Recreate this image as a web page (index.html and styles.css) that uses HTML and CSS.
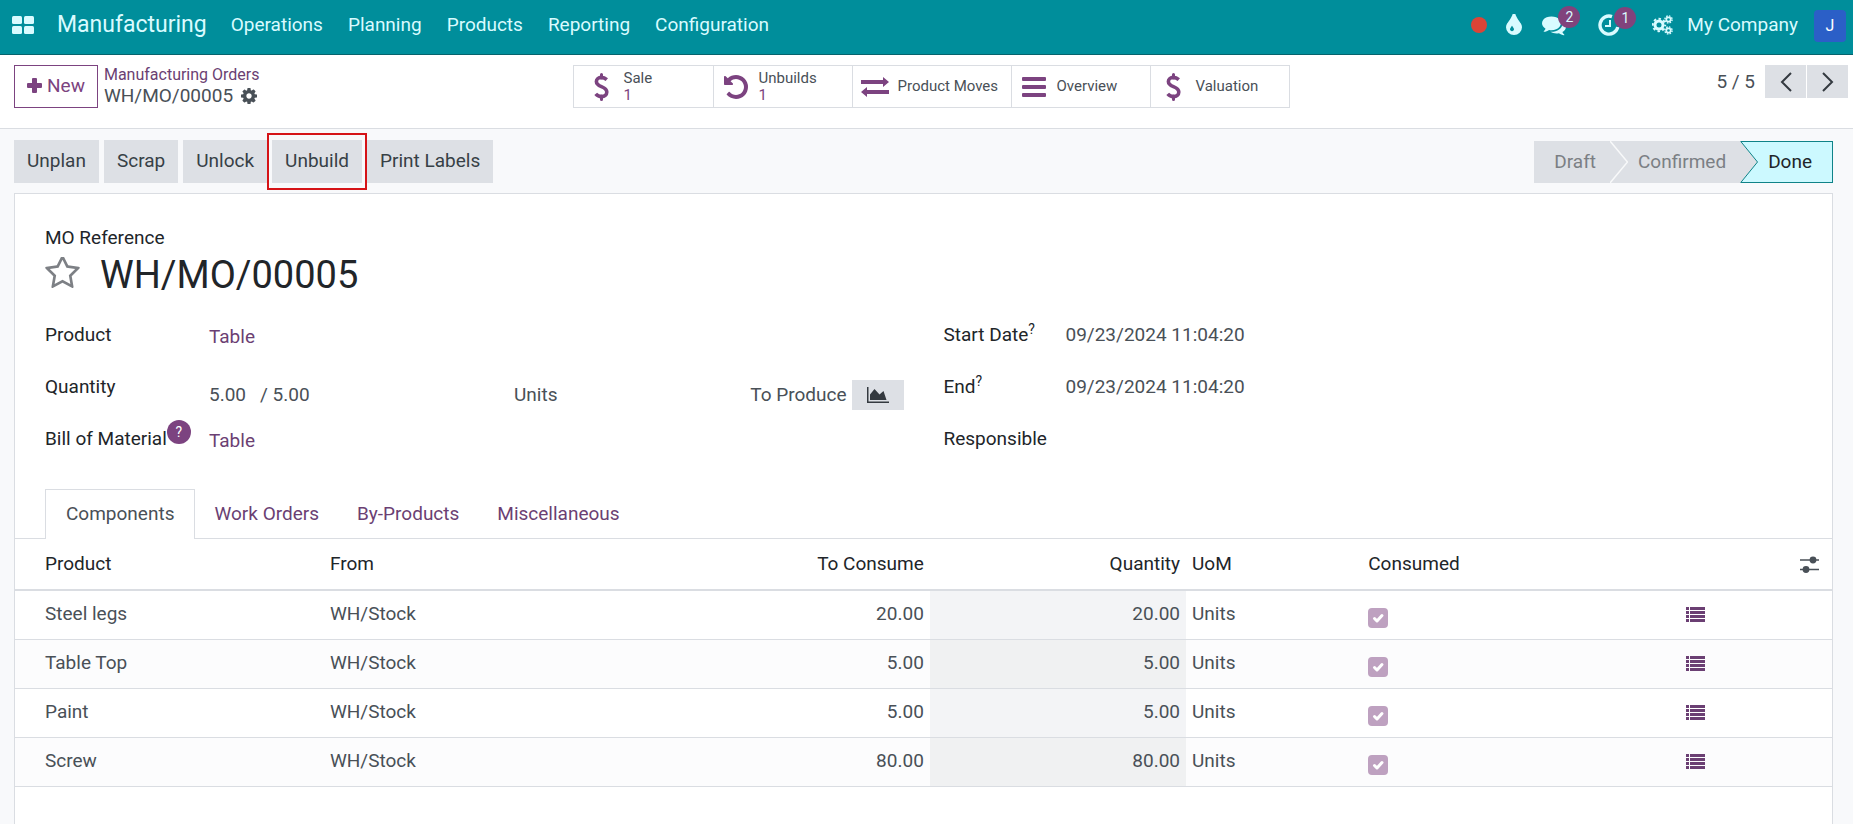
FILE: index.html
```html
<!DOCTYPE html>
<html lang="en">
<head>
<meta charset="utf-8">
<title>WH/MO/00005 - Manufacturing</title>
<meta name="viewport" content="width=device-width, initial-scale=1">
<link rel="stylesheet" href="styles.css">
</head>
<body>
<svg class="defs" aria-hidden="true">
  <symbol id="i-dollar" viewBox="0 0 15 28"><path d="M7.500 1.500V5M7.500 23v3.500" stroke="currentColor" stroke-width="3" stroke-linecap="round"/><path d="M12.800 6.600C11 5 9 4.400 7.300 4.400 4.500 4.400 2.400 6 2.400 8.600c0 2.900 2.300 4 5 5.100 3 1.200 5.400 2.400 5.400 5.300 0 2.900-2.300 4.600-5.200 4.600-2.200 0-4.400-1-5.900-2.800" fill="none" stroke="currentColor" stroke-width="3.600"/></symbol>
  <symbol id="i-list" viewBox="0 0 19 15"><path d="M0 0h3v3H0zM4 0h15v3H4zM0 4h3v3H0zM4 4h15v3H4zM0 8h3v3H0zM4 8h15v3H4zM0 12h3v3H0zM4 12h15v3H4z" fill="currentColor"/></symbol>
</svg>

<header class="navbar">
  <button class="apps" aria-label="Home menu"><svg width="22" height="18" viewBox="0 0 22 18"><g fill="currentColor"><rect width="10" height="8" rx="1.500"/><rect x="12" width="10" height="8" rx="1.500"/><rect y="10" width="10" height="8" rx="1.500"/><rect x="12" y="10" width="10" height="8" rx="1.500"/></g></svg></button>
  <a class="brand" href="#">Manufacturing</a>
  <nav class="menu">
    <a href="#">Operations</a><a href="#">Planning</a><a href="#">Products</a><a href="#">Reporting</a><a href="#">Configuration</a>
  </nav>
  <div class="systray">
    <span class="dot"></span>
    <button class="tray drop" aria-label="Theme"><svg width="16" height="21" viewBox="384 128 1024 1408" preserveAspectRatio="none"><path fill="currentColor" d="M896 1152q0-36-20-69-1-1-15.500-22.500t-25.500-38-25-44-21-50.500q-4-16-21-16t-21 16q-7 23-21 50.500t-25 44-25.500 38-15.500 22.500q-20 33-20 69 0 53 37.500 90.500t90.500 37.500 90.500-37.500 37.500-90.500zm512-128q0 212-150 362t-362 150-362-150-150-362q0-145 81-275 6-9 62.500-90.500t101-151 99.500-178 83-201.500q9-30 34-47t51-17 51.500 17 33.500 47q28 93 83 201.500t99.500 178 101 151 62.500 90.500q81 127 81 275z"/></svg></button>
    <button class="tray chat" aria-label="Messages"><svg width="24" height="24" viewBox="0 0 1792 1792"><path fill="currentColor" d="M1408 768q0 139-94 257t-256.500 186.500-353.500 68.500q-86 0-176-16-124 88-278 128-36 9-86 16h-3q-11 0-20.500-8t-11.500-21q-1-3-1-6.500t.5-6.500 2-6l2.500-5 3.500-5.500 4-5 4.500-5 4-4.500q5-6 23-25t26-29.500 22.500-29 25-38.500 20.500-44q-124-72-195-177t-71-224q0-139 94-257t256.500-186.500 353.500-68.500 353.500 68.500 256.500 186.500 94 257zm384 256q0 120-71 224.500t-195 176.500q10 24 20.500 44t25 38.500 22.500 29 26 29.500 23 25q1 1 4 4.500t4.500 5 4 5 3.500 5.500l2.500 5 2 6 .5 6.500-1 6.500q-3 14-13 22t-22 7q-50-7-86-16-154-40-278-128-90 16-176 16-271 0-472-132 58 4 88 4 161 0 309-45t264-129q125-92 192-212t67-254q0-77-23-152 129 71 204 178t75 230z"/></svg><span class="badge">2</span></button>
    <button class="tray clock" aria-label="Activities"><svg width="22" height="22" viewBox="0 0 22 22" fill="none" stroke="currentColor"><path d="M14 2.600A9 9 0 1 0 19.800 13" stroke-width="3.400"/><path d="M12 6v6H7" stroke-width="2"/></svg><span class="badge">1</span></button>
    <button class="tray cogs" aria-label="Developer tools"><svg width="21" height="20" viewBox="0 0 21 20" fill="none" stroke="currentColor"><circle cx="7" cy="10" r="4" stroke-width="3"/><circle cx="7" cy="10" r="6.200" stroke-width="2" stroke-dasharray="2.500 2.370" stroke-dashoffset="1.250"/><circle cx="16.500" cy="4.500" r="2.200" stroke-width="1.700"/><circle cx="16.500" cy="4.500" r="3.600" stroke-width="1.400" stroke-dasharray="1.600 1.230"/><circle cx="16.500" cy="15.500" r="2.200" stroke-width="1.700"/><circle cx="16.500" cy="15.500" r="3.600" stroke-width="1.400" stroke-dasharray="1.600 1.230"/></svg></button>
    <a class="company" href="#">My Company</a>
    <button class="avatar" aria-label="User menu">J</button>
  </div>
</header>

<section class="control">
  <div class="control-left">
    <button class="new"><svg width="15" height="15" viewBox="0 0 15 15"><path fill="currentColor" d="M6 0h3q1 0 1 1v4h4q1 0 1 1v3q0 1-1 1h-4v4q0 1-1 1H6q-1 0-1-1v-4H1q-1 0-1-1V6q0-1 1-1h4V1q0-1 1-1z"/></svg>New</button>
    <div class="crumbs">
      <a href="#">Manufacturing Orders</a>
      <div class="current"><span>WH/MO/00005</span><button class="gear" aria-label="Actions"><svg width="16" height="16" viewBox="128 128 1536 1536"><path fill="currentColor" d="M1152 896q0-106-75-181t-181-75-181 75-75 181 75 181 181 75 181-75 75-181zm512-109v222q0 12-8 23t-20 13l-185 28q-19 54-39 91 35 50 107 138 10 12 10 25t-9 23q-27 37-99 108t-94 71q-12 0-26-9l-138-108q-44 23-91 38-16 136-29 186-7 28-36 28h-222q-14 0-24.500-8.500t-11.500-21.500l-28-184q-49-16-90-37l-141 107q-10 9-25 9-14 0-25-11-126-114-165-168-7-10-7-23 0-12 8-23 15-21 51-66.500t54-70.500q-27-50-41-99l-183-27q-13-2-21-12.500t-8-23.500v-222q0-12 8-23t19-13l186-28q14-46 39-92-40-57-107-138-10-12-10-24 0-10 9-23 26-36 98.500-107.500t94.500-71.500q13 0 26 10l138 107q44-23 91-38 16-136 29-186 7-28 36-28h222q14 0 24.500 8.500t11.500 21.500l28 184q49 16 90 37l142-107q9-9 24-9 13 0 25 10 129 119 165 170 7 8 7 22 0 12-8 23-15 21-51 66.500t-54 70.500q26 50 41 98l183 28q13 2 21 12.500t8 23.500z"/></svg></button></div>
    </div>
  </div>
  <div class="stats">
    <button class="stat sale"><span class="stat-icon"><svg width="15" height="28"><use href="#i-dollar"/></svg></span><span class="stat-text">Sale<b>1</b></span></button>
    <button class="stat"><span class="stat-icon"><svg width="24" height="24" viewBox="128 128 1536 1536"><path fill="currentColor" d="M1664 896q0 156-61 298t-164 245-245 164-298 61q-172 0-327-72.500t-264-204.500q-7-10-6.500-22.500t8.500-20.500l137-138q10-9 25-9 16 2 23 12 73 95 179 147t225 52q104 0 198.500-40.500t163.500-109.500 109.500-163.500 40.500-198.500-40.500-198.500-109.500-163.500-163.500-109.500-198.500-40.500q-98 0-188 35.500t-160 101.500l137 138q31 30 14 69-17 40-59 40h-448q-26 0-45-19t-19-45v-448q0-42 40-59 39-17 69 14l130 129q107-101 244.500-156.500t284.500-55.500q156 0 298 61t245 164 164 245 61 298z"/></svg></span><span class="stat-text">Unbuilds<b>1</b></span></button>
    <button class="stat wide"><span class="stat-icon"><svg width="28" height="20" viewBox="0 0 28 20"><path fill="currentColor" d="M0 3h22V0l6 5-6 5V7H0zM28 13H6v-3l-6 5 6 5v-3h22z"/></svg></span><span class="stat-text">Product Moves</span></button>
    <button class="stat"><span class="stat-icon"><svg width="24" height="20" viewBox="0 0 24 20"><g fill="currentColor"><rect width="24" height="4" rx="1"/><rect y="8" width="24" height="4" rx="1"/><rect y="16" width="24" height="4" rx="1"/></g></svg></span><span class="stat-text">Overview</span></button>
    <button class="stat"><span class="stat-icon"><svg width="15" height="28"><use href="#i-dollar"/></svg></span><span class="stat-text">Valuation</span></button>
  </div>
  <div class="pager">
    <span>5 / 5</span>
    <div class="pager-buttons">
      <button aria-label="Previous"><svg width="12" height="20" viewBox="0 0 12 20"><path d="M11 1 2 10l9 9" fill="none" stroke="currentColor" stroke-width="2"/></svg></button>
      <button aria-label="Next"><svg width="12" height="20" viewBox="0 0 12 20"><path d="m1 1 9 9-9 9" fill="none" stroke="currentColor" stroke-width="2"/></svg></button>
    </div>
  </div>
</section>

<main class="content">
  <div class="statusbar">
    <div class="actions">
      <button>Unplan</button><button>Scrap</button><button>Unlock</button><button class="marked">Unbuild</button><button>Print Labels</button>
    </div>
    <div class="stages">
      <button class="stage first">Draft</button>
      <svg width="18" height="42" viewBox="0 0 18 42" aria-hidden="true"><path d="M0 0h18v42H0z" fill="#dde0e5"/><path d="M0 0l17.500 21L0 42" fill="none" stroke="#f8f9fa" stroke-width="1.500"/></svg>
      <button class="stage">Confirmed</button>
      <svg width="18" height="42" viewBox="0 0 18 42" aria-hidden="true"><path d="M0 0h18v42H0z" fill="#dde0e5"/><path d="M18.500.5H.8L17.500 21 .8 41.500h17.700" fill="#ccf9ff" stroke="#0f8388"/></svg>
      <button class="stage done">Done</button>
    </div>
  </div>

  <article class="sheet">
    <div class="title">
      <span class="label">MO Reference</span>
      <div class="title-row">
        <button class="star" aria-label="Priority"><svg width="35" height="33" viewBox="64 128 1664 1587"><path fill="currentColor" d="M1201 1004l306-297-422-62-189-382-189 382-422 62 306 297-73 421 378-199 377 199zm527-357q0 22-26 48l-363 354 86 500q1 7 1 20 0 50-41 50-19 0-40-12l-449-236-449 236q-22 12-40 12-21 0-31.500-14.500t-10.500-35.500q0-6 2-20l86-500-364-354q-25-27-25-48 0-37 56-46l502-73 225-455q19-41 49-41t49 41l225 455 502 73q56 9 56 46z"/></svg></button>
        <h1>WH/MO/00005</h1>
      </div>
    </div>

    <div class="groups">
      <div class="group left">
        <span class="label">Product</span><a class="value" href="#">Table</a>
        <span class="label">Quantity</span>
        <div class="qty">
          <span class="amounts"><span>5.00</span><span>/ 5.00</span></span>
          <span>Units</span>
          <span class="produce">To Produce<button class="chart" aria-label="Forecast"><svg width="22" height="16" viewBox="0 0 22 16"><path fill="currentColor" d="M0 0h1.500v14.500H22V16H0zM3 13V7.500L7.500 2l5 5.500L16.500 4 19.500 13z"/></svg></button></span>
        </div>
        <span class="label">Bill of Material<button class="help" aria-label="Help">?</button></span><a class="value" href="#">Table</a>
      </div>
      <div class="group right">
        <span class="label">Start Date<sup>?</sup></span><span>09/23/2024 11:04:20</span>
        <span class="label">End<sup>?</sup></span><span>09/23/2024 11:04:20</span>
        <span class="label">Responsible</span><span></span>
      </div>
    </div>

    <div class="tabs" role="tablist">
      <button class="tab active" role="tab" aria-selected="true">Components</button>
      <button class="tab" role="tab">Work Orders</button>
      <button class="tab" role="tab">By-Products</button>
      <button class="tab" role="tab">Miscellaneous</button>
    </div>

    <table class="lines">
      <colgroup><col class="c-product"><col class="c-from"><col class="c-consume"><col class="c-qty"><col class="c-uom"><col class="c-done"><col><col class="c-opt"></colgroup>
      <thead>
        <tr><th>Product</th><th>From</th><th class="num">To Consume</th><th class="num">Quantity</th><th>UoM</th><th>Consumed</th><th></th><th class="opt"><button aria-label="Columns"><svg width="19" height="17" viewBox="0 0 19 17"><path d="M0 4h19M0 13.500h19" stroke="currentColor" stroke-width="1.500"/><circle cx="13" cy="4" r="3.400" fill="currentColor"/><circle cx="6" cy="13.500" r="3.400" fill="currentColor"/></svg></button></th></tr>
      </thead>
      <tbody>
        <tr><td>Steel legs</td><td>WH/Stock</td><td class="num">20.00</td><td class="num qcell">20.00</td><td>Units</td><td><input type="checkbox" checked disabled aria-label="Steel legs consumed"></td><td><button class="detail" aria-label="Details"><svg width="19" height="15"><use href="#i-list"/></svg></button></td><td></td></tr>
        <tr><td>Table Top</td><td>WH/Stock</td><td class="num">5.00</td><td class="num qcell">5.00</td><td>Units</td><td><input type="checkbox" checked disabled aria-label="Table Top consumed"></td><td><button class="detail" aria-label="Details"><svg width="19" height="15"><use href="#i-list"/></svg></button></td><td></td></tr>
        <tr><td>Paint</td><td>WH/Stock</td><td class="num">5.00</td><td class="num qcell">5.00</td><td>Units</td><td><input type="checkbox" checked disabled aria-label="Paint consumed"></td><td><button class="detail" aria-label="Details"><svg width="19" height="15"><use href="#i-list"/></svg></button></td><td></td></tr>
        <tr><td>Screw</td><td>WH/Stock</td><td class="num">80.00</td><td class="num qcell">80.00</td><td>Units</td><td><input type="checkbox" checked disabled aria-label="Screw consumed"></td><td><button class="detail" aria-label="Details"><svg width="19" height="15"><use href="#i-list"/></svg></button></td><td></td></tr>
      </tbody>
    </table>
  </article>
</main>
</body>
</html>
```

FILE: styles.css
```css
:root {
  --teal: #008e9b;
  --purple: #7c4380;
  --link: #6b3f73;
  --gray: #dde0e5;
  --line: #dadde2;
  --text: #495057;
  --dark: #212529;
}

* { box-sizing: border-box; }

body {
  margin: 0;
  min-height: 100vh;
  display: flex;
  flex-direction: column;
  font-family: Roboto, "Liberation Sans", sans-serif;
  font-size: 19px;
  line-height: 28px;
  color: var(--text);
  background: #fff;
}

button {
  font: inherit;
  color: inherit;
  background: none;
  border: 0;
  padding: 0;
  margin: 0;
}

a { color: var(--link); text-decoration: none; }
svg { display: block; flex: none; }
.defs { position: absolute; width: 0; height: 0; }

/* Top navigation */
.navbar {
  display: flex;
  align-items: center;
  height: 55px;
  padding: 0 7px 5px 12px;
  background: var(--teal);
  border-bottom: 1px solid #06636c;
  color: #d9fbff;
}
.navbar a { color: inherit; }
.brand { margin-left: 23px; font-size: 23px; }
.menu { display: flex; gap: 25px; margin-left: 24px; }
.systray { display: flex; align-items: center; margin-left: auto; }
.dot { width: 16px; height: 16px; border-radius: 50%; background: #dc4437; }
.tray { position: relative; }
.drop { margin-left: 19px; }
.chat { margin-left: 20px; }
.clock { margin-left: 32px; }
.cogs { margin-left: 32px; }
.badge {
  position: absolute;
  top: -7px;
  left: 16px;
  width: 22px;
  height: 22px;
  border-radius: 50%;
  background: #81437c;
  font-size: 14px;
  line-height: 22px;
  text-align: center;
}
.company { margin-left: 14px; }
.avatar {
  width: 32px;
  height: 32px;
  margin: 3px 0 0 16px;
  border-radius: 4px;
  background: #2b5fc7;
  color: #fff;
  font-size: 16px;
}

/* Breadcrumb, stat buttons, pager */
.control {
  display: grid;
  grid-template-columns: 1fr auto 1fr;
  align-items: start;
  padding: 10px 5px 20px 14px;
  border-bottom: 1px solid var(--line);
}
.control-left { display: flex; gap: 6px; }
.new {
  display: flex;
  align-items: center;
  gap: 5px;
  height: 43px;
  padding: 0 12px 2px;
  border: 1px solid var(--purple);
  color: var(--purple);
}
.crumbs { font-size: 16px; line-height: 20px; }
.current { display: flex; align-items: center; gap: 8px; font-size: 19px; line-height: 22px; }
.stats { display: flex; border: 1px solid var(--line); height: 43px; }
.stat {
  display: flex;
  align-items: center;
  width: 139px;
  font-size: 15px;
  line-height: 17px;
  text-align: left;
}
.stat + .stat { border-left: 1px solid var(--line); }
.stat.wide { width: 159px; }
.stat.sale { padding-left: 5px; }
.stat-icon { display: flex; justify-content: center; width: 45px; color: var(--purple); }
.stat-text b { display: block; font-weight: 400; color: var(--purple); }
.pager { display: flex; align-items: center; justify-content: flex-end; gap: 10px; }
.pager-buttons { display: flex; gap: 1px; }
.pager-buttons button {
  display: flex;
  align-items: center;
  justify-content: center;
  width: 41px;
  height: 33px;
  background: var(--gray);
  color: #343a40;
}

/* Actions and stages */
.content {
  flex: 1;
  display: flex;
  flex-direction: column;
  padding: 11px 20px 0 14px;
  background: #f8f9fb;
}
.statusbar { display: flex; justify-content: space-between; align-items: center; margin-bottom: 10px; }
.actions { display: flex; gap: 5px; }
.actions button {
  height: 43px;
  padding: 0 13px 2px;
  background: var(--gray);
  color: #374046;
}
.actions .marked { position: relative; }
.marked::after {
  content: "";
  position: absolute;
  inset: -7px -5px;
  border: 2px solid #d51317;
}
.stages { display: flex; }
.stage { height: 42px; padding: 0 14px 0 10px; background: var(--gray); color: #7b7f84; }
.stage.first { padding-left: 20px; }
.stage.done {
  padding: 0 20px 0 10px;
  border: 1px solid #0f8388;
  border-left: 0;
  background: #ccf9ff;
  color: var(--dark);
}

/* Form sheet */
.sheet { flex: 1; border: 1px solid var(--line); border-bottom: 0; background: #fff; }
.label { color: var(--dark); }
.title { padding: 30px 30px 0; }
.title-row { display: flex; align-items: center; gap: 20px; }
.star { padding-bottom: 3px; color: #7d8085; }
h1 { margin: 0; font-size: 38px; line-height: 46px; font-weight: 400; color: var(--dark); }
.groups { display: grid; grid-template-columns: 1fr 1fr; gap: 40px; padding: 23px 30px 0; }
.group { display: grid; grid-auto-rows: 52px; align-content: start; align-items: start; }
.group.left { grid-template-columns: 164px 1fr; }
.group.right { grid-template-columns: 122px 1fr; }
.group sup { font-size: 14px; line-height: 0; }
.value { padding-top: 2px; }
.qty { display: grid; grid-template-columns: 305px 1fr auto; align-items: center; padding-top: 7px; }
.amounts { display: flex; gap: 14px; }
.produce { display: flex; align-items: center; gap: 5px; }
.chart { display: flex; align-items: center; justify-content: center; width: 52px; height: 30px; background: var(--gray); color: #343a40; }
.help {
  width: 24px;
  height: 24px;
  margin: -8px 0;
  border-radius: 50%;
  background: var(--purple);
  color: #fff;
  font-size: 14px;
  line-height: 24px;
  vertical-align: 8px;
}

/* Notebook */
.tabs { display: flex; padding: 0 30px; border-bottom: 1px solid var(--line); margin-top: 12px; }
.tab { height: 49px; padding: 0 19px; color: var(--link); }
.tab.active {
  height: 50px;
  margin-bottom: -1px;
  padding: 0 20px 2px;
  border: 1px solid var(--line);
  border-bottom: 0;
  background: #fff;
  color: var(--text);
}

.lines { width: 100%; table-layout: fixed; border-collapse: separate; border-spacing: 0; }
.c-product, .c-from { width: 17%; }
.c-consume { width: 16.35%; }
.c-qty { width: 14.1%; }
.c-uom { width: 9.7%; }
.c-done { width: 17.5%; }
.c-opt { width: 38px; }
.lines th, .lines td { padding: 0 6px; text-align: left; font-weight: 400; white-space: nowrap; }
.lines th { height: 52px; border-bottom: 2px solid var(--line); color: var(--dark); }
.lines td { height: 49px; padding-bottom: 2px; border-bottom: 1px solid var(--line); }
.lines th:first-child, .lines td:first-child { padding-left: 30px; }
.lines .num { text-align: right; }
.lines tbody tr:nth-child(even) { background: #fcfcfd; }
.lines .qcell { background: #f3f4f6; }
.lines tr:nth-child(even) .qcell { background: #f0f1f2; }
.lines .opt { color: var(--text); }
.detail { color: var(--link); }
.detail svg, .opt svg { display: inline-block; vertical-align: middle; }
.lines input {
  appearance: none;
  display: block;
  width: 20px;
  height: 20px;
  margin: 8px 0 0;
  border-radius: 4px;
  background: #bea1c0 url("data:image/svg+xml,%3Csvg xmlns='http://www.w3.org/2000/svg' viewBox='0 0 20 20'%3E%3Cpath d='m6.500 10.500 2.500 2.500 5-5.500' fill='none' stroke='%23fff' stroke-width='3' stroke-linecap='round' stroke-linejoin='round'/%3E%3C/svg%3E") center / 20px no-repeat;
}
```
